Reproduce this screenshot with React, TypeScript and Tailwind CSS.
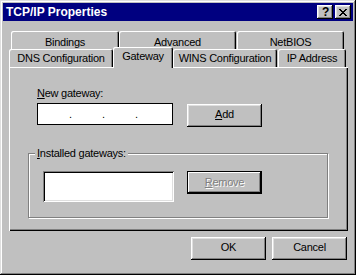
import React from "react";

const raised =
  "shadow-[inset_-1px_-1px_0_#000,inset_1px_1px_0_#fff,inset_-2px_-2px_0_#808080,inset_2px_2px_0_#dfdfdf]";

function Btn({ children, className = "" }: { children: React.ReactNode; className?: string }) {
  return (
    <div
      className={`w-[75px] h-[23px] bg-[#c0c0c0] flex items-center justify-center pb-[2px] ${raised} ${className}`}
    >
      {children}
    </div>
  );
}

function Tab({
  children,
  w,
  className = "",
}: {
  children: React.ReactNode;
  w: string;
  className?: string;
}) {
  return (
    <div
      className={`${w} bg-[#c0c0c0] flex justify-center rounded-tl-[2px] rounded-tr-[2px] shadow-[inset_1px_1px_0_#fff,inset_-1px_0_0_#000,inset_-2px_0_0_#808080] ${className}`}
    >
      {children}
    </div>
  );
}

export default function App() {
  return (
    <div className="w-[356px] h-[275px] bg-[#c0c0c0] p-[3px] flex flex-col font-['Liberation_Sans',Arial,sans-serif] text-[11px] leading-[13px] tracking-[-0.25px] text-black select-none shadow-[inset_-1px_-1px_0_#000,inset_1px_1px_0_#dfdfdf,inset_-2px_-2px_0_#808080,inset_2px_2px_0_#fff]">
      {/* Title bar */}
      <div className="h-[18px] bg-[#000080] flex items-center pl-[3px] pr-[2px] shrink-0">
        <span className="flex-1 text-white font-bold text-[12px] leading-[14px] tracking-normal">TCP/IP Properties</span>
        <div className={`w-[16px] h-[14px] bg-[#c0c0c0] flex items-center justify-center ${raised}`}>
          <span className="font-bold text-[12px] leading-[12px] pl-[1px]">?</span>
        </div>
        <div className={`ml-[2px] w-[16px] h-[14px] bg-[#c0c0c0] flex items-center justify-center ${raised}`}>
          <svg width="8" height="7" viewBox="0 0 8 7" shapeRendering="crispEdges" className="ml-[-1px]">
            <path
              fill="#000"
              d="M0 0h2v1H0zM6 0h2v1H6zM1 1h2v1H1zM5 1h2v1H5zM2 2h4v1H2zM3 3h2v1H3zM2 4h4v1H2zM1 5h2v1H1zM5 5h2v1H5zM0 6h2v1H0zM6 6h2v1H6z"
            />
          </svg>
        </div>
      </div>

      {/* Tabs row 1 */}
      <div className="flex ml-[8px] mt-[10px] h-[18px] shrink-0">
        <Tab w="w-[108px]" className="pt-[5px]">Bindings</Tab>
        <Tab w="w-[117px]" className="pt-[5px]">Advanced</Tab>
        <Tab w="w-[107px] ml-[1px]" className="pt-[5px]">NetBIOS</Tab>
      </div>
      {/* Tabs row 2 */}
      <div className="flex items-start ml-[6px] h-[18px] shrink-0">
        <Tab w="w-[104px] h-[18px]" className="pt-[3px]">DNS Configuration</Tab>
        <Tab w="w-[60px] h-[21px] -mt-[2px]" className="pt-[3px] relative z-10">Gateway</Tab>
        <Tab w="w-[104px] h-[18px]" className="pt-[3px]">WINS Configuration</Tab>
        <Tab w="w-[68px] h-[18px] ml-[1px]" className="pt-[3px]">IP Address</Tab>
      </div>

      {/* Panel */}
      <div className="ml-[6px] w-[339px] h-[164px] shrink-0 shadow-[inset_1px_1px_0_#fff,inset_-1px_-1px_0_#000,inset_-2px_-2px_0_#808080]">
        <div className="pl-[28px] pt-[20px]">
          <div>
            <span className="underline underline-offset-1">N</span>ew gateway:
          </div>
          <div className="flex items-start mt-[3px]">
            <div className="w-[136px] h-[22px] border border-black bg-white flex items-center pl-[31px]">
              <span className="w-[33px]">.</span>
              <span className="w-[33px]">.</span>
              <span className="w-[33px]">.</span>
            </div>
            <Btn className="ml-[14px] mt-[1px]">
              <span>
                <span className="underline underline-offset-1">A</span>dd
              </span>
            </Btn>
          </div>
        </div>

        {/* Group box */}
        <div className="relative ml-[19px] mt-[26px] w-[300px] h-[65px] border border-[#808080] shadow-[inset_1px_1px_0_#fff,1px_1px_0_#fff] pl-[14px] pt-[17px] flex items-start">
          <div className="absolute left-[6px] top-[-7px] bg-[#c0c0c0] px-[2px]">
            <span className="underline underline-offset-1">I</span>nstalled gateways:
          </div>
          <div className="w-[131px] h-[31px] bg-white shadow-[inset_1px_1px_0_#808080,inset_-1px_-1px_0_#fff,inset_2px_2px_0_#000,inset_-2px_-2px_0_#dfdfdf]" />
          <div className="ml-[13px] w-[75px] h-[23px] bg-[#c0c0c0] border border-black flex items-center justify-center pb-[1px] shadow-[inset_-1px_-1px_0_#000,inset_1px_1px_0_#fff,inset_-2px_-2px_0_#808080]">
            <span className="text-[#808080] [text-shadow:1px_1px_0_#fff]">
              <span className="underline underline-offset-1">R</span>emove
            </span>
          </div>
        </div>
      </div>

      {/* Bottom buttons */}
      <div className="flex justify-end gap-[6px] mt-[6px] pr-[6px] shrink-0">
        <Btn>OK</Btn>
        <Btn>Cancel</Btn>
      </div>
    </div>
  );
}
